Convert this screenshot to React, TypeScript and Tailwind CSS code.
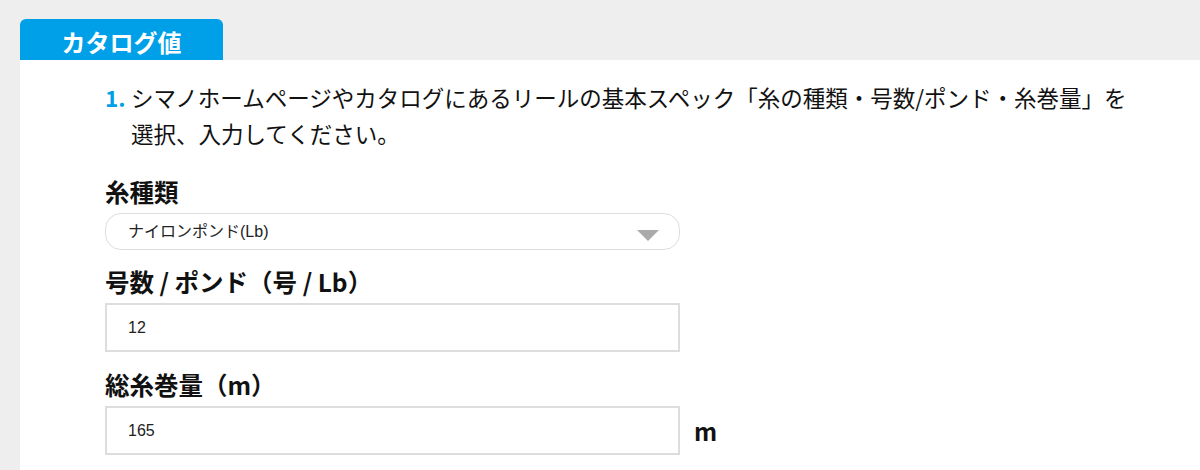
import { useState } from 'react';

const jp = "font-['Noto_Sans_CJK_JP','Noto_Sans',sans-serif]";
const field = "font-['Liberation_Sans','Noto_Sans_CJK_JP',sans-serif] text-[16px] text-[#222]";

export default function App() {
  const [lineType, setLineType] = useState('nylon-lb');
  const [size, setSize] = useState('12');
  const [length, setLength] = useState('165');

  return (
    <div className={`min-h-[470px] bg-[#eeeeee] pt-[19px] pl-[20px] ${jp}`}>
      {/* Tab */}
      <div className="flex h-[41px] w-[203px] items-center justify-center rounded-t-[6px] bg-[#00a0e9] pt-[4px]">
        <span className="text-[24px] font-bold leading-none text-white">カタログ値</span>
      </div>

      {/* Panel */}
      <div className="min-h-[410px] bg-white pl-[85px] pt-[19px] pb-[15px] text-[#111]">
        {/* Step */}
        <div className="flex text-[22.5px] leading-[36px]">
          <span className="w-[26px] shrink-0 font-bold text-[#00a0e9]">1.</span>
          <p>
            シマノホームページやカタログにあるリールの基本スペック「糸の種類・号数/ポンド・糸巻量」を
            <br />
            選択、入力してください。
          </p>
        </div>

        {/* 糸種類 */}
        <label className="mt-[25px] mb-[5px] block text-[24.5px] font-bold leading-[32px]">糸種類</label>
        <div className="relative w-[575px]">
          <select
            value={lineType}
            onChange={(e) => setLineType(e.target.value)}
            className={`h-[37px] w-full appearance-none rounded-[16px] border border-[#dddddd] bg-white pl-[22px] outline-none ${field}`}
          >
            <option value="nylon-lb">ナイロンポンド(Lb)</option>
            <option value="nylon-go">ナイロン号数</option>
            <option value="pe">PE</option>
          </select>
          <svg className="pointer-events-none absolute right-[21px] top-[17px]" width="22" height="11" viewBox="0 0 22 11">
            <polygon points="0,0 22,0 11,11" fill="#aaaaaa" />
          </svg>
        </div>

        {/* 号数 / ポンド */}
        <label className="mt-[16px] mb-[5px] block text-[24.5px] font-bold leading-[32px]">号数 / ポンド（号 / Lb）</label>
        <input
          value={size}
          onChange={(e) => setSize(e.target.value)}
          className={`block h-[49px] w-[575px] border-2 border-[#dddddd] bg-white pl-[21px] outline-none ${field}`}
        />

        {/* 総糸巻量 */}
        <label className="mt-[17px] mb-[5px] block text-[24.5px] font-bold leading-[32px]">総糸巻量（m）</label>
        <div className="flex items-center">
          <input
            value={length}
            onChange={(e) => setLength(e.target.value)}
            className={`block h-[49px] w-[575px] border-2 border-[#dddddd] bg-white pl-[21px] outline-none ${field}`}
          />
          <span className="ml-[14px] text-[24px] font-bold leading-none">m</span>
        </div>
      </div>
    </div>
  );
}
